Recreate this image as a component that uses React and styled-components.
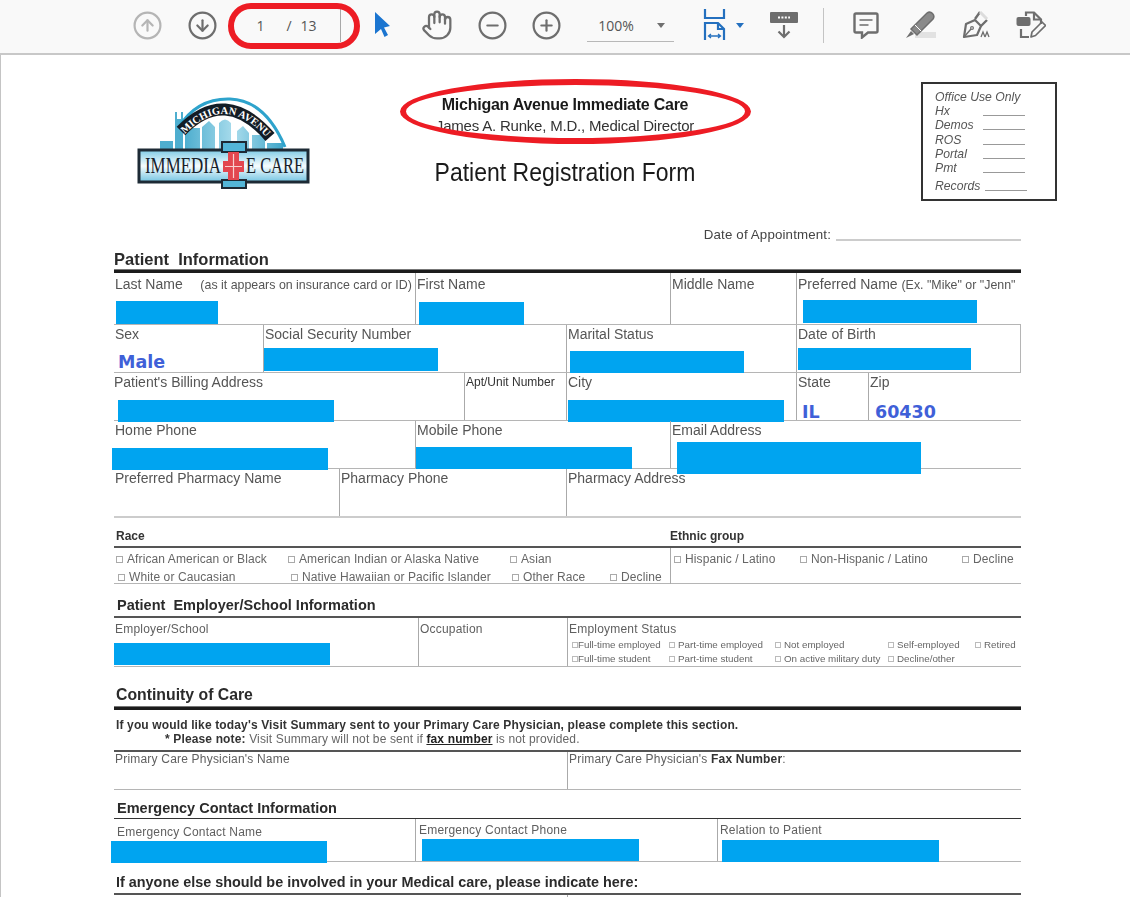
import React from 'react'
import styled, { createGlobalStyle, css } from 'styled-components'
import { CircleArrowUp, CircleArrowDown, CircleMinus, CirclePlus, Hand } from 'lucide-react'

const GlobalStyle = createGlobalStyle`
    html, body {
        margin: 0;
        height: 897px;
        overflow: hidden;
        background: #fff;
        font-family: "Liberation Sans", Arial, sans-serif;
    }
`

// ================================= toolbar icons =================================

const CursorIcon = () => (
    <svg width="17" height="26" viewBox="0 0 17 26">
        <path d="M1 0 L16 14 L10 15.5 L14 23 L10.5 25 L7 17 L1 22 Z" fill="#1b75d0" />
    </svg>
)

const FitIcon = () => (
    <svg width="24" height="32" viewBox="0 0 24 32" fill="none" stroke="#2470bf" strokeWidth="2.2">
        <path d="M2 0 V9 H21 V0" />
        <path d="M2 31 V14 H15 L21 20 V31" />
        <path d="M15 14 V20 H21" />
        <path d="M5.5 27 H17.5 M8 25 L5.5 27 L8 29 M15 25 L17.5 27 L15 29" strokeWidth="1.3" />
    </svg>
)

const ReadIcon = () => (
    <svg width="28" height="27" viewBox="0 0 28 27">
        <rect x="0" y="0" width="28" height="11" rx="1" fill="#6e6e6e" />
        <path d="M8 5.5 H20" stroke="#fff" strokeWidth="2" strokeDasharray="2 1.4" />
        <path d="M14 13 V25 M8.5 19.5 L14 25 L19.5 19.5" fill="none" stroke="#6e6e6e" strokeWidth="2.2" />
    </svg>
)

const CommentIcon = () => (
    <svg width="26" height="27" viewBox="0 0 26 27" fill="none" stroke="#6e6e6e" strokeWidth="2.4">
        <path d="M3 1.5 H23 Q24.5 1.5 24.5 3 V19 Q24.5 20.5 23 20.5 H15 L9 25.5 V20.5 H3 Q1.5 20.5 1.5 19 V3 Q1.5 1.5 3 1.5 Z" />
        <path d="M6.5 8 H19.5 M6.5 13 H15.5" strokeWidth="1.4" />
    </svg>
)

const HighlightIcon = () => (
    <svg width="30" height="28" viewBox="0 0 30 28">
        <rect x="9" y="21" width="21" height="6" fill="#e2e2e2" />
        <path d="M0 27 L5 20 L8 23 Z" fill="#6e6e6e" />
        <path d="M5 18 L21 2 Q24 0 26.5 2.5 Q29 5 27 8 L11 24 Z" fill="#8a8a8a" stroke="#6e6e6e" strokeWidth="1.5" />
        <path d="M9 14 L15 20" stroke="#fff" strokeWidth="1" />
    </svg>
)

const SignIcon = () => (
    <svg width="30" height="28" viewBox="0 0 30 28" fill="none" stroke="#6e6e6e" strokeWidth="2.2">
        <path d="M3 26 L5 13 L14 9 L20 15 L16 24 Z" strokeLinejoin="round" />
        <path d="M3 26 L10 18" strokeWidth="1.5" />
        <circle cx="11" cy="17" r="1.4" strokeWidth="1.2" />
        <path d="M14 8 L19 1 M20 15 L26 9" strokeWidth="2.4" />
        <path d="M19 1 L26 8" stroke="#dcdcdc" strokeWidth="3" />
        <path d="M20 26 L22 21 L24 26 M24 26 L26 21 L28 26" strokeWidth="1.3" />
    </svg>
)

const FillIcon = () => (
    <svg width="30" height="28" viewBox="0 0 30 28" fill="none" stroke="#6e6e6e" strokeWidth="2.2">
        <path d="M10 5 V1.5 H18 L25 8.5 V13" />
        <path d="M18 1.5 V8.5 H25" />
        <rect x="0.5" y="6" width="14" height="9" rx="2" fill="#6e6e6e" stroke="none" />
        <path d="M5 18 V26 H13" />
        <path d="M15 26 L16 21 L26 11 L29.5 14.5 L19.5 24.5 Z" strokeWidth="1.7" strokeLinejoin="round" />
    </svg>
)

// drawn logo, the clinic's mark
const Logo = () => (
    <svg width="173" height="93" viewBox="0 0 173 93">
        <defs>
            <linearGradient id="bannerFill" x1="0" y1="0" x2="0" y2="1">
                <stop offset="0" stopColor="#7fcbe6" />
                <stop offset=".5" stopColor="#f6fcfe" />
                <stop offset="1" stopColor="#74c4e2" />
            </linearGradient>
            <linearGradient id="cityFill" x1="0" y1="0" x2="1" y2="0">
                <stop offset="0" stopColor="#4eaecf" />
                <stop offset=".5" stopColor="#a9dcec" />
                <stop offset="1" stopColor="#3fa5c9" />
            </linearGradient>
            <path id="archPath" d="M47 38 Q88 -6 131 42" />
        </defs>
        <path d="M38 53 V15 H40 V22 H44 V15 H46 V53 Z M23 53 V44 H36 V53 Z" fill="#4eaecf" />
        <path d="M48 53 V31 H63 V53 Z M65 53 V30 L72 24 L78 30 V53 Z M82 53 V26 Q88 19 94 26 V53 Z M100 53 V34 L106 29 L112 36 V53 Z M115 53 V38 H128 V53 Z M130 53 V46 H146 V53 Z" fill="url(#cityFill)" />
        <path d="M42 30 Q60 1 93 2 Q128 3 148 50" fill="none" stroke="#2ea3cc" strokeWidth="3" />
        <path d="M44 34 Q88 -12 133 40" fill="none" stroke="#131c25" strokeWidth="12" />
        <text fontFamily="'Liberation Serif', serif" fontSize="10.5" fontWeight="700" fill="#fff">
            <textPath href="#archPath" startOffset="1">MICHIGAN AVENUE</textPath>
        </text>
        <rect x="2" y="53" width="169" height="32" fill="url(#bannerFill)" stroke="#1d2a35" strokeWidth="3" />
        <text x="8" y="76" fontFamily="'Liberation Serif', serif" fontSize="24" fill="#17202a" textLength="76" lengthAdjust="spacingAndGlyphs">IMMEDIA</text>
        <text x="109" y="76" fontFamily="'Liberation Serif', serif" fontSize="24" fill="#17202a" textLength="58" lengthAdjust="spacingAndGlyphs">E CARE</text>
        <path d="M85 45 H109 V55 H85 Z M85 83 H109 V91 H85 Z" fill="#53b6d8" stroke="#1d2a35" strokeWidth="2" />
        <path d="M91 55 H102 V64 H107 V75 H102 V83 H91 V75 H86 V64 H91 Z" fill="#e2474f" />
        <path d="M96.5 57 V81 M88 69.5 H105" stroke="#f8d0d0" strokeWidth="1.2" />
    </svg>
)

// ================================= page =================================

const App = () => (
    <>
        <GlobalStyle />
        <Toolbar>
            <ToolSlot $color="#b5b5b5"><CircleArrowUp size={31} strokeWidth={1.7} /></ToolSlot>
            <ToolSlot $color="#6e6e6e"><CircleArrowDown size={31} strokeWidth={1.7} /></ToolSlot>
            <PageBox>
                <PageNum>1</PageNum>
                <PageSlash>/</PageSlash>
                <PageNum>13</PageNum>
            </PageBox>
            <ToolSpacer />
            <ToolSlot><CursorIcon /></ToolSlot>
            <ToolSlot $color="#6e6e6e"><Hand size={32} strokeWidth={1.7} /></ToolSlot>
            <ToolSlot $color="#6e6e6e"><CircleMinus size={31} strokeWidth={1.7} /></ToolSlot>
            <ToolSlot $color="#6e6e6e"><CirclePlus size={31} strokeWidth={1.7} /></ToolSlot>
            <ZoomSelect>
                100%
                <Caret $color="#707070" />
            </ZoomSelect>
            <FitSlot>
                <FitIcon />
                <Caret $color="#2470bf" />
            </FitSlot>
            <ReadSlot><ReadIcon /></ReadSlot>
            <ToolDivider />
            <MarkSlot><CommentIcon /></MarkSlot>
            <MarkSlot><HighlightIcon /></MarkSlot>
            <MarkSlot><SignIcon /></MarkSlot>
            <MarkSlot><FillIcon /></MarkSlot>
            <PageCircle />
        </Toolbar>

        <Page>
            <Header>
                <LogoWrap><Logo /></LogoWrap>
                <TitleBlock>
                    <ClinicName>Michigan Avenue Immediate Care</ClinicName>
                    <Director>James A. Runke, M.D., Medical Director</Director>
                    <FormTitle>Patient Registration Form</FormTitle>
                    <NameCircle />
                </TitleBlock>
                <OfficeBox>
                    <OfficeHead>Office Use Only</OfficeHead>
                    <OfficeRow>Hx<OfficeLine /></OfficeRow>
                    <OfficeRow>Demos<OfficeLine /></OfficeRow>
                    <OfficeRow>ROS<OfficeLine /></OfficeRow>
                    <OfficeRow>Portal<OfficeLine /></OfficeRow>
                    <OfficeRow>Pmt<OfficeLine /></OfficeRow>
                    <OfficeRow $gap>Records<OfficeLine /></OfficeRow>
                </OfficeBox>
            </Header>

            <Appointment>Date of Appointment: <AppointmentLine /></Appointment>

            <Heading $h={23} $top={3} $size={16.5}>Patient&nbsp; Information</Heading>
            <ThickRule />
            <Row $cols="301px 255px 126px 225px" $h={52}>
                <Cell>
                    <Label $top={3}>Last Name <Small>&nbsp; &nbsp; (as it appears on insurance card or ID)</Small></Label>
                    <Redact $x={2} $y={28} $w={102} $h={23} />
                </Cell>
                <Cell $line>
                    <Label $top={3}>First Name</Label>
                    <Redact $x={3} $y={29} $w={105} $h={23} />
                </Cell>
                <Cell $line><Label $top={3}>Middle Name</Label></Cell>
                <Cell $line>
                    <Label $top={3}>Preferred Name <Small>(Ex. "Mike" or "Jenn"</Small></Label>
                    <Redact $x={6} $y={27} $w={174} $h={23} />
                </Cell>
            </Row>
            <Row $cols="149px 303px 230px 225px" $h={48} $closed>
                <Cell>
                    <Label>Sex</Label>
                    <Filled $left={4} $top={28}>Male</Filled>
                </Cell>
                <Cell $line>
                    <Label>Social Security Number</Label>
                    <Redact $x={0} $y={23} $w={174} $h={23} />
                </Cell>
                <Cell $line>
                    <Label>Marital Status</Label>
                    <Redact $x={3} $y={26} $w={174} $h={22} />
                </Cell>
                <Cell $line>
                    <Label>Date of Birth</Label>
                    <Redact $x={1} $y={23} $w={173} $h={22} />
                </Cell>
            </Row>
            <Row $cols="350px 102px 230px 72px 153px" $h={48}>
                <Cell>
                    <Label $left={0}>Patient's Billing Address</Label>
                    <Redact $x={4} $y={27} $w={216} $h={22} />
                </Cell>
                <Cell $line><TinyLabel>Apt/Unit Number</TinyLabel></Cell>
                <Cell $line>
                    <Label>City</Label>
                    <Redact $x={1} $y={27} $w={216} $h={22} />
                </Cell>
                <Cell $line>
                    <Label>State</Label>
                    <Filled $left={5} $top={30}>IL</Filled>
                </Cell>
                <Cell $line>
                    <Label>Zip</Label>
                    <Filled $left={6} $top={30}>60430</Filled>
                </Cell>
            </Row>
            <Row $cols="301px 255px 351px" $h={48}>
                <Cell>
                    <Label>Home Phone</Label>
                    <Redact $x={-2} $y={27} $w={216} $h={22} />
                </Cell>
                <Cell $line>
                    <Label>Mobile Phone</Label>
                    <Redact $x={0} $y={26} $w={216} $h={22} />
                </Cell>
                <Cell $line>
                    <Label>Email Address</Label>
                    <Redact $x={6} $y={21} $w={244} $h={32} />
                </Cell>
            </Row>
            <Row $cols="225px 227px 455px" $h={49} $heavy>
                <Cell><Label>Preferred Pharmacy Name</Label></Cell>
                <Cell $line><Label>Pharmacy Phone</Label></Cell>
                <Cell $line><Label>Pharmacy Address</Label></Cell>
            </Row>

            <RaceHeads>
                <MiniHead>Race</MiniHead>
                <MiniHead>Ethnic group</MiniHead>
            </RaceHeads>
            <MidRule />
            <Row $cols="556px 351px" $h={36}>
                <Cell>
                    <OptionRow $cols="172px 222px 1fr" $pad={2} $top={4}>
                        <Option>African American or Black</Option>
                        <Option>American Indian or Alaska Native</Option>
                        <Option>Asian</Option>
                    </OptionRow>
                    <OptionRow $cols="173px 221px 98px 1fr" $pad={4} $top={4}>
                        <Option>White or Caucasian</Option>
                        <Option>Native Hawaiian or Pacific Islander</Option>
                        <Option>Other Race</Option>
                        <Option>Decline</Option>
                    </OptionRow>
                </Cell>
                <Cell $line>
                    <OptionRow $cols="126px 162px 1fr" $pad={3} $top={4}>
                        <Option>Hispanic / Latino</Option>
                        <Option>Non-Hispanic / Latino</Option>
                        <Option>Decline</Option>
                    </OptionRow>
                </Cell>
            </Row>

            <Heading $h={32} $top={11} $left={3}>Patient&nbsp; Employer/School Information</Heading>
            <MidRule />
            <Row $cols="304px 149px 454px" $h={49}>
                <Cell>
                    <SmallLabel $top={4}>Employer/School</SmallLabel>
                    <Redact $x={0} $y={25} $w={216} $h={22} />
                </Cell>
                <Cell $line><SmallLabel $top={4}>Occupation</SmallLabel></Cell>
                <Cell $line>
                    <SmallLabel $top={4}>Employment Status</SmallLabel>
                    <WorkRow>
                        <WorkOption>Full-time employed</WorkOption>
                        <WorkOption>Part-time employed</WorkOption>
                        <WorkOption>Not employed</WorkOption>
                        <WorkOption>Self-employed</WorkOption>
                        <WorkOption>Retired</WorkOption>
                    </WorkRow>
                    <WorkRow>
                        <WorkOption>Full-time student</WorkOption>
                        <WorkOption>Part-time student</WorkOption>
                        <WorkOption>On active military duty</WorkOption>
                        <WorkOption>Decline/other</WorkOption>
                    </WorkRow>
                </Cell>
            </Row>

            <Heading $h={39} $top={18} $left={2} $size={15.8}>Continuity of Care</Heading>
            <ThickRule />
            <Notice>
                <strong>If you would like today's Visit Summary sent to your Primary Care Physician, please complete this section.</strong>
                <NoticeNote><strong>* Please note:</strong> Visit Summary will not be sent if <Fax>fax number</Fax> is not provided.</NoticeNote>
            </Notice>
            <MidRule />
            <Row $cols="453px 454px" $h={38}>
                <Cell><SmallLabel $top={0}>Primary Care Physician's Name</SmallLabel></Cell>
                <Cell $line><SmallLabel $top={0}>Primary Care Physician's <strong>Fax Number</strong>:</SmallLabel></Cell>
            </Row>

            <Heading $h={28} $top={8} $left={3}>Emergency Contact Information</Heading>
            <ThinRule />
            <Row $cols="301px 302px 304px" $h={43}>
                <Cell>
                    <SmallLabel $top={6} $left={3}>Emergency Contact Name</SmallLabel>
                    <Redact $x={-3} $y={22} $w={216} $h={22} />
                </Cell>
                <Cell $line>
                    <SmallLabel $top={4} $left={3}>Emergency Contact Phone</SmallLabel>
                    <Redact $x={6} $y={20} $w={217} $h={22} />
                </Cell>
                <Cell $line>
                    <SmallLabel $top={4} $left={2}>Relation to Patient</SmallLabel>
                    <Redact $x={4} $y={21} $w={217} $h={22} />
                </Cell>
            </Row>

            <Heading $h={31} $top={10} $left={2} $size={14.4}>If anyone else should be involved in your Medical care, please indicate here:</Heading>
            <MidRule />
            <Row $cols="453px 454px" $h={20}>
                <Cell />
                <Cell $line />
            </Row>
        </Page>
    </>
)

export default App


// ================================= styling =================================

// the form is a scan, its text is a little soft
const scanned = css`
    filter: blur(.35px);
`

const Toolbar = styled.div`
    position: relative;
    box-sizing: border-box;
    height: 55px;
    padding: 0 0 3px 120px;
    display: flex;
    align-items: center;
    background: #f9f9f9;
    border-bottom: 2px solid #c8c8c8;
`

const ToolSlot = styled.div`
    width: 54.7px;
    height: 40px;
    flex: none;
    display: flex;
    align-items: center;
    justify-content: center;
    color: ${p => p.$color || 'inherit'};
`

const PageBox = styled.div`
    width: 112px;
    height: 34px;
    flex: none;
    box-sizing: border-box;
    padding-left: 27px;
    display: flex;
    align-items: center;
    border-right: 1px solid #a8a8a8;
    font-family: "Open Sans", sans-serif;
    font-size: 14px;
    color: #555;
`

const PageNum = styled.span``

const PageSlash = styled.span`
    margin: 0 9px 0 22px;
`

const ToolSpacer = styled.div`
    width: 14px;
    flex: none;
`

const ZoomSelect = styled.div`
    width: 87px;
    height: 32px;
    margin: 2px 0 0 13px;
    flex: none;
    box-sizing: border-box;
    padding: 0 9px 0 11px;
    display: flex;
    align-items: center;
    justify-content: space-between;
    border-bottom: 1px solid #b8b8b8;
    font-family: "Open Sans", sans-serif;
    font-size: 14px;
    color: #555;
`

const Caret = styled.span`
    width: 0;
    height: 0;
    border-left: 4.5px solid transparent;
    border-right: 4.5px solid transparent;
    border-top: 5px solid ${p => p.$color};
`

const FitSlot = styled.div`
    margin-left: 29px;
    width: 41px;
    flex: none;
    display: flex;
    align-items: center;
    justify-content: space-between;
`

const ReadSlot = styled.div`
    margin-left: 26px;
    width: 28px;
    flex: none;
    display: flex;
`

const ToolDivider = styled.div`
    width: 1px;
    height: 35px;
    margin: 0 27px 0 25px;
    flex: none;
    background: #c4c4c4;
`

const MarkSlot = styled.div`
    width: 30px;
    margin-right: 25px;
    flex: none;
    display: flex;
    justify-content: center;
`

// red marker rings someone drew on top of the screenshot
const PageCircle = styled.div`
    position: absolute;
    left: 228px;
    top: 3px;
    width: 132px;
    height: 46px;
    box-sizing: border-box;
    border: 6px solid #ed1c24;
    border-radius: 24px;
`

const NameCircle = styled.div`
    position: absolute;
    left: -33px;
    top: -1px;
    width: 351px;
    height: 65px;
    box-sizing: border-box;
    border: 6px solid #ed1c24;
    border-radius: 50%;
`

const Page = styled.div`
    padding-left: 113px;
    width: 907px;
    height: 842px;
    border-left: 1px solid #c4c4c4;
    color: #555;
`

const Header = styled.div`
    height: 167px;
    display: flex;
    align-items: flex-start;
`

const LogoWrap = styled.div`
    margin: 42px 0 0 23px;
    width: 173px;
    flex: none;
`

const TitleBlock = styled.div`
    position: relative;
    margin: 25px 0 0 123px;
    width: 264px;
    flex: none;
    text-align: center;
    color: #1a1a1a;
`

const ClinicName = styled.div`
    ${scanned}
    font-size: 16px;
    line-height: 20px;
    margin-top: 15px;
    font-weight: 700;
    letter-spacing: -.25px;
`

const Director = styled.div`
    ${scanned}
    font-size: 15px;
    line-height: 20px;
    margin-top: 1px;
    color: #333;
    letter-spacing: -.2px;
`

const FormTitle = styled.div`
    ${scanned}
    display: flex;
    justify-content: center;
    margin: 20px -20px 0;
    font-size: 26px;
    line-height: 32px;
    white-space: nowrap;
    transform: scaleX(.885);
`

const OfficeBox = styled.div`
    margin: 27px 0 0 224px;
    width: 136px;
    height: 119px;
    flex: none;
    box-sizing: border-box;
    padding: 6px 0 0 12px;
    border: 2px solid #333;
    font-size: 12.2px;
    font-style: italic;
    line-height: 14.2px;
    color: #555;
`

const OfficeHead = styled.div`
    ${scanned}
`

const OfficeRow = styled.div`
    ${scanned}
    display: flex;
    justify-content: space-between;
    padding-right: ${p => p.$gap ? '28px' : '30px'};
    margin-top: ${p => p.$gap ? '4px' : '0'};
`

const OfficeLine = styled.span`
    width: 42px;
    height: 11px;
    border-bottom: 1px solid #999;
`

const Appointment = styled.div`
    height: 24px;
    display: flex;
    justify-content: flex-end;
    align-items: center;
    gap: 5px;
    font-size: 13.3px;
    color: #444;
    letter-spacing: .15px;
    ${scanned}
`

const AppointmentLine = styled.span`
    width: 185px;
    height: 12px;
    border-bottom: 2px solid #ccc;
`

const Heading = styled.div`
    ${scanned}
    height: ${p => p.$h}px;
    box-sizing: border-box;
    padding: ${p => p.$top ?? 3}px 0 0 ${p => p.$left ?? 0}px;
    font-size: ${p => p.$size ?? 14.5}px;
    line-height: 20px;
    font-weight: 700;
    color: #2b2b2b;
    white-space: pre;
`

const ThickRule = styled.div`
    height: 3px;
    background: #1c1c1c;
    border-top: 1px solid #777;
`

const MidRule = styled.div`
    height: 2px;
    background: #555;
`

const ThinRule = styled.div`
    height: 1px;
    background: #333;
`

const Row = styled.div`
    display: grid;
    grid-template-columns: ${p => p.$cols};
    height: ${p => p.$h}px;
    box-sizing: border-box;
    border-bottom: ${p => p.$heavy ? '2px solid #ccc' : '1px solid #b5b5b5'};
    border-right: ${p => p.$closed ? '1px solid #b5b5b5' : 'none'};
`

const Cell = styled.div`
    position: relative;
    min-width: 0;
    border-left: ${p => p.$line ? '1px solid #aaa' : 'none'};
`

const Label = styled.div`
    ${scanned}
    padding: ${p => p.$top ?? 1}px 0 0 ${p => p.$left ?? 1}px;
    font-size: 14px;
    line-height: 16px;
    white-space: nowrap;
    color: #555;
`

const Small = styled.span`
    font-size: 12.4px;
`

const TinyLabel = styled.div`
    ${scanned}
    padding: 1px 0 0 1px;
    font-size: 12px;
    line-height: 16px;
    color: #333;
    white-space: nowrap;
`

const SmallLabel = styled.div`
    ${scanned}
    padding: ${p => p.$top ?? 3}px 0 0 ${p => p.$left ?? 1}px;
    font-size: 12px;
    line-height: 14px;
    white-space: nowrap;
    color: #606060;
    letter-spacing: .2px;

    strong {
        color: #333;
    }
`

// blue marker blocks covering personal data
const Redact = styled.div`
    position: absolute;
    left: ${p => p.$x}px;
    top: ${p => p.$y}px;
    width: ${p => p.$w}px;
    height: ${p => p.$h}px;
    background: #00a4f0;
`

const Filled = styled.div`
    position: absolute;
    left: ${p => p.$left}px;
    top: ${p => p.$top - 1}px;
    font-family: "DejaVu Sans", sans-serif;
    font-size: 17.5px;
    line-height: 20px;
    font-weight: 700;
    color: #3f60d8;
`

const RaceHeads = styled.div`
    height: 28px;
    display: grid;
    grid-template-columns: 554px 351px;
    align-items: end;
    padding: 0 0 3px 2px;
    box-sizing: border-box;
`

const MiniHead = styled.div`
    ${scanned}
    font-size: 12px;
    line-height: 14px;
    font-weight: 700;
    color: #333;
`

const OptionRow = styled.div`
    display: grid;
    grid-template-columns: ${p => p.$cols};
    padding: ${p => p.$top}px 0 0 ${p => p.$pad}px;
`

const Option = styled.div`
    ${scanned}
    font-size: 12px;
    line-height: 14px;
    white-space: nowrap;
    color: #666;
    letter-spacing: .1px;

    &::before {
        content: "";
        display: inline-block;
        width: 5px;
        height: 5px;
        margin-right: 4px;
        border: 1px solid #aaa;
        vertical-align: 0;
    }
`

const WorkRow = styled.div`
    display: grid;
    grid-template-columns: 97px 106px 113px 87px 1fr;
    padding: 3px 0 0 4px;
`

const WorkOption = styled.div`
    ${scanned}
    font-size: 9.8px;
    line-height: 11px;
    white-space: nowrap;
    color: #666;

    &::before {
        content: "";
        display: inline-block;
        width: 4px;
        height: 4px;
        margin-right: 3px;
        border: 1px solid #bbb;
        vertical-align: 0;
    }

    &:first-child::before {
        margin-right: 0;
    }
`

const Notice = styled.div`
    ${scanned}
    height: 40px;
    box-sizing: border-box;
    padding: 8px 0 0 2px;
    font-size: 12px;
    line-height: 14px;
    color: #333;
    letter-spacing: .14px;
`

const NoticeNote = styled.div`
    padding-left: 49px;
    color: #666;

    strong {
        color: #333;
    }
`

const Fax = styled.span`
    font-weight: 700;
    color: #222;
    text-decoration: underline;
`
